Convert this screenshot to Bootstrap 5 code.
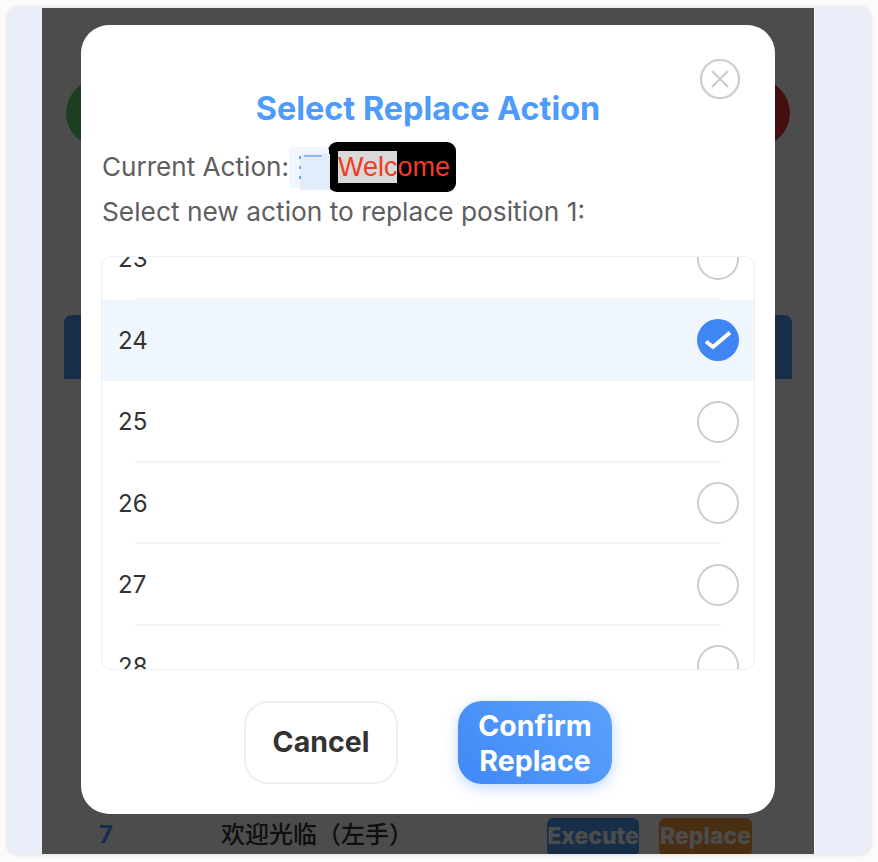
<!DOCTYPE html>
<html lang="en">
<head>
<meta charset="utf-8">
<title>Select Replace Action</title>
<link href="https://cdn.jsdelivr.net/npm/bootstrap@5.3.0/dist/css/bootstrap.min.css" rel="stylesheet">
<style>
html,body{height:100%;overflow:hidden}
body{background:#fbfbfb;padding:8px;font-family:Inter,"Noto Sans CJK SC",sans-serif;color:#333}
.shell{height:846px;width:862px;background:#e9eef8;border-radius:10px;overflow:hidden;box-shadow:0 0 5px rgba(0,0,0,.16);padding:0 55px 0 34px;position:relative}
.pagebox{height:100%;background:#fff;overflow:hidden;padding:0 22px;border-right:1px solid #fff;color:#333}
.topbar{padding-top:71px;height:171px}
.dot{width:68px;height:68px;border-radius:50%;margin-left:2px;margin-right:2px}
.dot-g{background:#61d26e}.dot-r{background:#df3535}
.sepband{height:77px;margin:0 -22px;border-top:1px solid #f2f2f2;border-bottom:1px solid #f0f0f0}
.headbar{margin-top:59px;height:64px;background:#4f9cf5;border-radius:8px 8px 0 0}
.rowline{height:73px;border-bottom:1px solid #f4f4f4}
.lastrow{font-size:24px;height:60px;padding-top:1px}
.numcell{width:157px;padding-left:35px;color:#4f9cf5;font-weight:700;font-size:24px;line-height:34px}
.namecell{font-weight:500;font-size:24px;line-height:34px;white-space:nowrap}
.tbtn{font-weight:800;font-size:23px;color:#fff;border-radius:6px;line-height:36px;height:38px;text-align:center;white-space:nowrap}
.tbtn-b{background:#4f9cf5;width:92px}
.tbtn-o{background:#f79a3e;width:93px;margin-left:20px;margin-right:40px}
.veil{position:absolute;inset:0 56px 0 34px;background:rgba(0,0,0,.7)}
.dialog{position:absolute;left:73px;top:17px;width:694px;height:789px;background:#fff;border-radius:28px;padding:0 20px}
.xbtn{position:absolute;right:35px;top:34px;width:40px;height:40px;padding:0;border:0;background:none}
.dtitle{margin:0;padding-top:65px;height:114px;font-size:32.4px;line-height:38px;font-weight:700;color:#4d9bfd;text-align:center}
.curline{height:50px;margin-left:1px;margin-top:3px;font-size:26.1px;color:#5e5e5e}
.grab{width:40px;height:41px;background:#f1f6fe;border-radius:4px;margin-right:-1px;margin-top:1px;position:relative;flex:none}
.grab2{position:absolute;left:11px;top:7px;width:30px;height:36px;background:#e2ecfb}
.grab-dash{position:absolute;left:10px;top:9px;height:26px;width:2px;background:repeating-linear-gradient(#6ea6f3 0 3px,transparent 3px 10px)}
.grab-top{position:absolute;left:15px;top:8px;width:18px;height:2px;background:#8cb9f6}
.blackbox{background:#000;border-radius:9px;height:50px;width:128px;padding-left:10px;font-family:"Liberation Sans",Arial,sans-serif;font-size:27px;color:#f03c24;flex:none}
.sel{background:#d9d9d9;line-height:32px;display:inline-block}
.subline{margin:0 0 0 1px;font-size:26.3px;line-height:32px;color:#5e5e5e;height:64px;padding-top:4px}
.chooser{height:414px;border:1px solid #eef0f3;border-radius:10px;overflow:hidden}
.chooser-in{margin-top:-39px}
.optrow{height:81.5px;padding:0 15px 0 16px;font-size:24px;color:#333;font-weight:400;position:relative}
.optrow span:first-child{padding-top:1px}
.optrow::after{content:"";position:absolute;left:33px;right:33px;bottom:0;height:2px;background:#f5f5f5}
.optrow.picked{background:#eff6fe}
.radio-o{width:42px;height:42px;border:2px solid #cccccc;border-radius:50%}
.foot{padding-top:31px;gap:60px}
.btn-cancel{width:154px;height:83px;background:#fff;border:2px solid #eeeef3;border-radius:24px;color:#333;font-size:28.5px;font-weight:700;padding:0}
.btn-go{width:154px;height:83px;background:linear-gradient(45deg,#4089f6,#5ba2fc);border:0;border-radius:24px;color:#fff;font-size:28.5px;line-height:35px;font-weight:700;padding:0;box-shadow:0 4px 14px rgba(74,144,250,.35)}
.btn-cancel:hover{background:#fff;color:#333}
.btn-go:hover{color:#fff}
</style>
</head>
<body>
<div class="shell">
  <div class="pagebox">
    <div class="topbar d-flex justify-content-between">
      <div class="dot dot-g"></div>
      <div class="dot dot-r"></div>
    </div>
    <div class="sepband"></div>
    <div class="headbar"></div>
    <div class="rowline"></div>
    <div class="rowline"></div>
    <div class="rowline"></div>
    <div class="rowline"></div>
    <div class="rowline"></div>
    <div class="rowline"></div>
    <div class="lastrow d-flex align-items-start">
      <div class="numcell">7</div>
      <div class="namecell">欢迎光临（左手）</div>
      <div class="tbtn tbtn-b ms-auto">Execute</div>
      <div class="tbtn tbtn-o">Replace</div>
    </div>
  </div>
  <div class="veil"></div>
  <div class="dialog">
    <button class="xbtn" type="button" aria-label="Close">
      <svg width="40" height="40" viewBox="0 0 40 40" fill="none" stroke="#cdcdcd" stroke-width="2.2"><circle cx="20" cy="20" r="19"/><path d="M12 12 28 28M28 12 12 28"/></svg>
    </button>
    <h2 class="dtitle">Select Replace Action</h2>
    <div class="curline d-flex align-items-center">
      <span>Current Action:</span>
      <div class="grab"><div class="grab2"></div><div class="grab-dash"></div><div class="grab-top"></div></div>
      <div class="blackbox d-flex align-items-center"><span class="sel">Welc</span><span>ome</span></div>
    </div>
    <p class="subline">Select new action to replace position 1:</p>
    <div class="chooser">
      <div class="chooser-in">
        <div class="optrow d-flex align-items-center justify-content-between"><span>23</span><span class="radio-o"></span></div>
        <div class="optrow picked d-flex align-items-center justify-content-between"><span>24</span>
          <svg width="42" height="42" viewBox="0 0 42 42"><circle cx="21" cy="21" r="21" fill="#3f86f4"/><path d="M9 22.5 16 28 33 13.5" fill="none" stroke="#fff" stroke-width="4"/></svg>
        </div>
        <div class="optrow d-flex align-items-center justify-content-between"><span>25</span><span class="radio-o"></span></div>
        <div class="optrow d-flex align-items-center justify-content-between"><span>26</span><span class="radio-o"></span></div>
        <div class="optrow d-flex align-items-center justify-content-between"><span>27</span><span class="radio-o"></span></div>
        <div class="optrow d-flex align-items-center justify-content-between"><span>28</span><span class="radio-o"></span></div>
      </div>
    </div>
    <div class="foot d-flex justify-content-center">
      <button class="btn btn-cancel" type="button">Cancel</button>
      <button class="btn btn-go" type="button">Confirm Replace</button>
    </div>
  </div>
</div>
<script src="https://cdn.jsdelivr.net/npm/bootstrap@5.3.0/dist/js/bootstrap.bundle.min.js"></script>
</body>
</html>
